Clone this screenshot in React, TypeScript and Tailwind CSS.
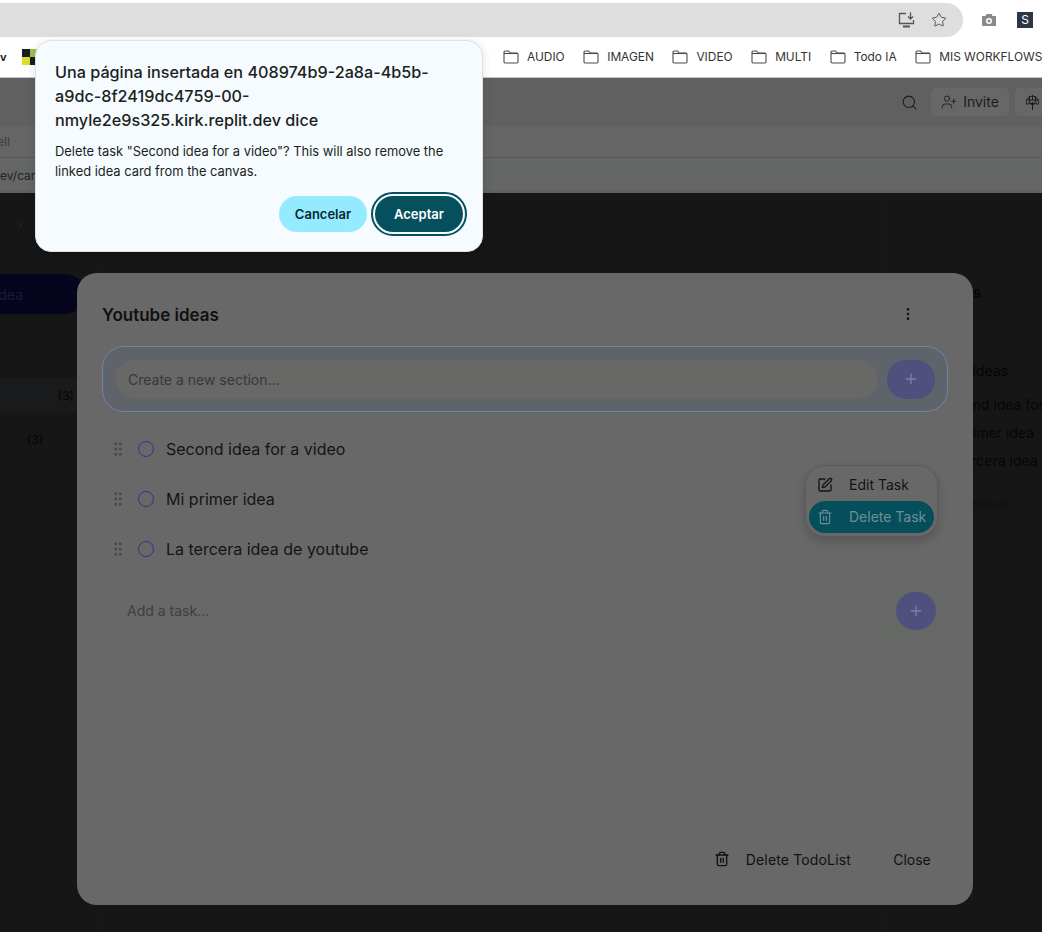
import React from 'react';
import { Plus, Search, Star, Trash2, SquarePen, UserPlus, GripVertical, EllipsisVertical, ChevronRight } from 'lucide-react';

const bookmarks = ['AUDIO', 'IMAGEN', 'VIDEO', 'MULTI', 'Todo IA', 'MIS WORKFLOWS'];
const tasks = ['Second idea for a video', 'Mi primer idea', 'La tercera idea de youtube'];

function FolderIcon() {
  return (
    <svg width="16" height="14" viewBox="0 0 16 14" fill="none" stroke="#4b4b4b" strokeWidth="1.1" className="shrink-0">
      <path d="M1 3V2.2C1 1.5 1.5 1 2.2 1h3.4l1.6 2h6.6c.7 0 1.2.5 1.2 1.2v7.6c0 .7-.5 1.2-1.2 1.2H2.200c-.7 0-1.200-.5-1.200-1.200V3z" strokeLinejoin="round" />
      <path d="M1 3.500h14" />
    </svg>
  );
}

function InstallIcon() {
  return (
    <svg width="18" height="16" viewBox="0 0 18 16" fill="none" stroke="#555" strokeWidth="1.300">
      <path d="M8 1.500H1.500v10h14V8" />
      <path d="M12.500 0.500v6M10 4.500l2.500 2.500L15 4.500" />
      <path d="M5 14.500h7" strokeWidth="2" />
    </svg>
  );
}

function CameraIcon() {
  return (
    <svg width="16" height="14" viewBox="0 0 16 14">
      <path fillRule="evenodd" fill="#8a8a8a" d="M5.500 1h5l1 2H14c.6 0 1 .4 1 1v8c0 .6-.4 1-1 1H2c-.6 0-1-.4-1-1V4c0-.6.4-1 1-1h2.500l1-2zM8 5a3 3 0 1 0 0 6 3 3 0 0 0 0-6zm0 1.500a1.500 1.500 0 1 1 0 3 1.500 1.500 0 0 1 0-3z" />
    </svg>
  );
}

function PublishIcon() {
  return (
    <svg width="15" height="17" viewBox="0 0 15 17" fill="none" stroke="#1c1c1c" strokeWidth="1">
      <path d="M2 10.500a6 6 0 1 1 11 0L10 9l-2.500 2L5 9l-3 1.500z" />
      <path d="M1.500 6h12M7.500 1v5M4.500 2Q4 6 5 9M10.500 2q.5 4-.5 7" />
      <path d="M7.500 16V8.500M5.500 10.500l2-2 2 2" />
    </svg>
  );
}

export default function App() {
  return (
    <div className="relative flex h-[932px] w-[1042px] flex-col overflow-hidden bg-[#161616] font-['Inter',sans-serif]">
      {/* browser chrome */}
      <div className="h-[3px] shrink-0 bg-white" />
      <div className="flex h-[34px] shrink-0 bg-white">
        <div className="flex w-[963px] items-center justify-end gap-[15px] rounded-r-[17px] bg-[#dedede] pr-[16px]">
          <InstallIcon />
          <Star size={16} strokeWidth={1.500} className="text-[#555]" />
        </div>
        <div className="flex flex-1 items-center pl-[18px] gap-[20px]">
          <CameraIcon />
          <div className="flex h-4 w-4 items-center justify-center bg-[#2b3648] text-[12px] text-white">S</div>
        </div>
      </div>
      <div className="flex h-[41px] shrink-0 items-center overflow-hidden bg-white border-b border-[#c6c6c6]">
        <div className="flex w-[503px] shrink-0 items-center">
          <span className="w-[22px] text-[11px] font-bold leading-none text-[#222]">v</span>
          <div className="grid h-4 w-4 grid-cols-2 grid-rows-2">
            <div className="bg-[#1c1c1c]" />
            <div className="bg-[#9cc04a]" />
            <div className="bg-[#dcdc2c]" />
            <div className="bg-[#1c1c1c]" />
          </div>
        </div>
        <div className="flex items-center gap-[18.500px]">
          {bookmarks.map((b) => (
            <div key={b} className="flex items-center gap-2 whitespace-nowrap text-[11.900px] text-[#333]">
              <FolderIcon />
              {b}
            </div>
          ))}
        </div>
      </div>

      {/* dimmed app header */}
      <div className="flex h-[48px] shrink-0 items-center justify-end gap-[6px] bg-[#606060]">
        <Search size={17} strokeWidth={1.500} className="mr-[7px] text-[#1c1c1c]" />
        <div className="flex h-[28px] w-[78px] items-center justify-center gap-[6px] rounded-[5px] bg-[#676767] pb-[1px] text-[14px] text-[#1c1c1c]">
          <UserPlus size={16} strokeWidth={1.300} />
          Invite
        </div>
        <div className="flex h-[28px] w-[27px] items-center rounded-l-[5px] bg-[#676767] pl-[10px]">
          <PublishIcon />
        </div>
      </div>
      <div className="flex h-[32px] shrink-0 items-center border-b border-[#575757] bg-[#656565] text-[12px] text-[#3c3c3c]">
        <span className="-ml-[3px]">ell</span>
      </div>
      <div className="flex h-[35px] shrink-0 items-center border-b-[3px] border-[#606160] bg-[#646665] pt-[3px] text-[12px] text-[#222]">ev/canvas</div>

      {/* dimmed canvas behind the modal */}
      <div className="flex flex-1 justify-between">
        <aside className="w-[104px] border-r border-[#191919]">
          <ChevronRight size={14} className="ml-[13px] mt-[26px] text-[#222]" />
          <div className="mt-[41px] flex h-[40px] w-[85px] items-center justify-end rounded-r-[20px] bg-[#05051e] pr-[62px] text-[14px] text-[#1a1a3c]">
            <span className="whitespace-nowrap">Idea</span>
          </div>
          <div className="mt-[64px] flex h-[35px] w-[90px] items-center justify-end bg-[#191a1c] pr-[16px] text-[12px] text-[#050505]">(3)</div>
          <div className="mt-[18px] pl-[27px] text-[12px] text-[#050505]">(3)</div>
        </aside>
        <aside className="w-[160px] whitespace-nowrap border-l border-[#191919] text-[14px] text-[#060606]">
          <div className="mt-[89px] pl-[62px] text-[16px] font-semibold leading-[20px]">Lists</div>
          <div className="mt-[59px] pl-[30px] text-[14px] font-medium leading-[20px]">Youtube ideas</div>
          <div className="mt-[14px] flex flex-col gap-[8px] pl-[56px] leading-[20px]">
            <span>Second idea for a video</span>
            <span>Mi primer idea</span>
            <span>La tercera idea de youtube</span>
          </div>
          <div className="mt-[25px] pl-[63px] text-[12px] leading-[16px] text-[#0e0e0e]">Completed</div>
        </aside>
      </div>

      {/* todo modal */}
      <div className="absolute left-[77px] top-[273px] flex h-[632px] w-[896px] flex-col rounded-[20px] bg-[#686868] px-[25px] pb-[26px]">
        <div className="flex h-[73px] shrink-0 items-end justify-between pb-[19px]">
          <h2 className="text-[17px] font-semibold leading-[24px] text-[#111]">Youtube ideas</h2>
          <EllipsisVertical size={16} className="mr-[32px] mb-[5px] text-[#111]" />
        </div>

        <div className="flex h-[66px] items-center gap-[9px] rounded-[22px] border border-[#6f84a6] bg-[#5f646b] pl-[12px] pr-[12px]">
          <div className="flex h-[38px] flex-1 items-center rounded-[19px] bg-[#686866] pl-[13px] text-[14px] text-[#36383c]">
            Create a new section...
          </div>
          <div className="flex h-[39px] w-[48px] items-center justify-center rounded-[19px] bg-[#50507e] text-[#7e7ea6]">
            <Plus size={16} />
          </div>
        </div>

        <ul className="mt-[12px] flex flex-col">
          {tasks.map((t) => (
            <li key={t} className="flex h-[50px] items-center pl-[7px] text-[16px] text-[#141414]">
              <GripVertical size={18} strokeWidth={2} className="w-[18px] text-[#4a4a4a]" />
              <span className="ml-[11px] h-4 w-4 rounded-full border-[1.500px] border-[#33338f]" />
              <span className="ml-[12px]">{t}</span>
            </li>
          ))}
        </ul>

        <div className="mt-[8px] flex h-[58px] items-center gap-[10px] rounded-[22px] bg-[#666866] pl-[13px] pr-[12px]">
          <div className="flex h-[40px] flex-1 items-center rounded-[20px] bg-[#676867] pb-[1px] pl-[12px] text-[14px] text-[#3e4042]">
            Add a task...
          </div>
          <div className="flex h-[38px] w-[40px] items-center justify-center rounded-full bg-[#50507e] text-[#7e7ea6]">
            <Plus size={16} />
          </div>
        </div>

        <div className="mt-auto flex items-center justify-end text-[14px] text-[#111]">
          <Trash2 size={16} strokeWidth={2} />
          <span className="ml-[16px] mr-[25px] tracking-[0.15px]">Delete TodoList</span>
          <span className="flex h-[40px] w-[72px] items-center justify-center rounded-[20px] border border-[#666]">Close</span>
        </div>

        {/* task menu */}
        <div className="absolute left-[728px] top-[192px] flex w-[133px] flex-col rounded-[20px] border border-[#5c5c5c] bg-[#686868] p-[3px] shadow-[0_4px_10px_rgba(0,0,0,0.18)]">
          <div className="flex h-[32px] items-center gap-[16px] pb-[1px] pl-[8px] text-[14px] text-[#141414]">
            <SquarePen size={16} strokeWidth={2} />
            Edit Task
          </div>
          <div className="flex h-[32px] items-center gap-[16px] rounded-[16px] bg-[#054f5c] pb-[1px] pl-[8px] text-[14px] text-[#6d9098]">
            <Trash2 size={16} strokeWidth={1.700} />
            Delete Task
          </div>
        </div>
      </div>

      {/* browser confirm dialog */}
      <div className="absolute left-[35px] top-[40px] flex h-[212px] w-[448px] flex-col rounded-[16px] border border-[#dde2e6] bg-[#f5fbff] px-[19px] pt-[19px] text-[#1c1f21] shadow-[0_2px_10px_rgba(0,0,0,0.12)]">
        <h1 className="text-[16.200px] font-medium leading-[24px]">
          Una página insertada en 408974b9-2a8a-4b5b-<br />
          a9dc-8f2419dc4759-00-<br />
          nmyle2e9s325.kirk.replit.dev dice
        </h1>
        <p className="mt-[10px] text-[12.900px] leading-[20px]">
          Delete task "Second idea for a video"? This will also remove the linked idea card from the canvas.
        </p>
        <div className="mt-[14px] flex justify-end gap-[8px]">
          <button className="h-[36px] w-[88px] rounded-[18px] bg-[#94ebff] pt-[1px] text-[13px] font-semibold text-[#07282e]">Cancelar</button>
          <button className="h-[36px] w-[88px] rounded-[18px] bg-[#05505c] pt-[1px] text-[13px] font-semibold text-white ring-2 ring-[#f5fbff] outline-2 outline-offset-2 outline-[#05505c]">Aceptar</button>
        </div>
      </div>
    </div>
  );
}
